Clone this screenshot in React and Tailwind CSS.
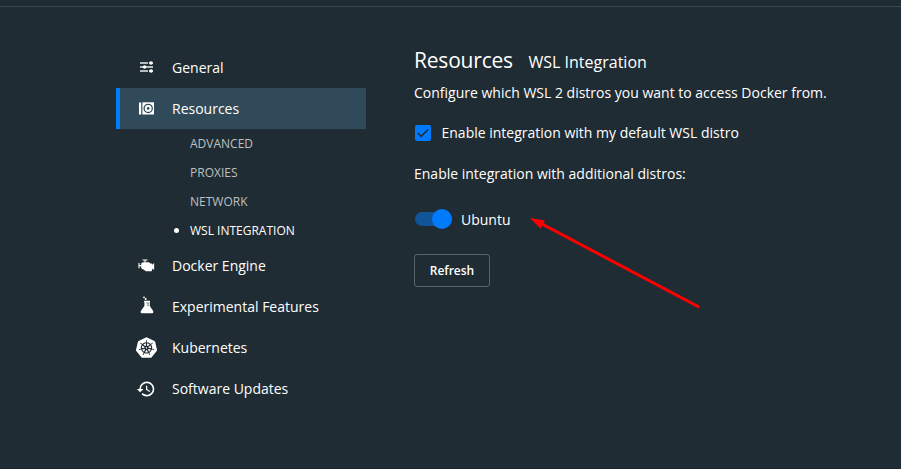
import React from "react";
import { SiKubernetes } from "react-icons/si";
import { MdHistory } from "react-icons/md";

function SlidersIcon() {
  return (
    <svg className="-mt-0.5" width="15" height="12" viewBox="0 0 15 12">
      <path d="M1 2H9M1 6H4M7 6H14M1 10H9M10 2H14M10 10H14" fill="none" stroke="#e8eaeb" strokeWidth="1.4" />
      <g fill="#fff">
        <circle cx="12" cy="2" r="1.8" />
        <circle cx="5.6" cy="6" r="1.8" />
        <circle cx="12" cy="10" r="1.8" />
      </g>
    </svg>
  );
}

function DriveIcon() {
  return (
    <svg className="-mt-px" width="15" height="13" viewBox="0 0 15 13">
      <rect x="0" y="0.5" width="2.2" height="12" fill="#fff" />
      <rect x="3.4" y="0.3" width="11.6" height="12.2" fill="#fff" />
      <circle cx="9.2" cy="6.4" r="4.1" fill="none" stroke="#314a5a" strokeWidth="1.3" />
      <circle cx="9.2" cy="6.4" r="1.3" fill="#314a5a" />
    </svg>
  );
}

function EngineIcon() {
  return (
    <svg className="-ml-px" width="17" height="13" viewBox="0 0 17 13">
      <path d="M4.6 1H9.4M7 1V3.4M1 4V9.2M1 6.6H3.4M15.6 4.4V10.4" fill="none" stroke="#fff" strokeWidth="1.1" />
      <path d="M3.2 4.2L5 3.2H11L12.4 4.4H13.8L14.4 5.4H15.6V9.8H14.4L13.6 12.2H8L5.4 10.4L3.2 9.2Z" fill="#fff" />
    </svg>
  );
}

function FlaskIcon() {
  return (
    <svg className="-mt-1" width="14" height="18" viewBox="0 0 14 18">
      <circle cx="4" cy="1.3" r=".9" fill="#fff" />
      <circle cx="5.7" cy="3" r="1" fill="#fff" />
      <path d="M4 4.8H10V5.8H9.8V10L13.2 15Q13.8 17.3 12.4 17.3H1.6Q.2 17.3 .8 15L4.4 10V5.8H4Z" fill="#fff" />
      <path d="M6.4 7.1H9M6.9 9.1H9" stroke="#202c33" strokeWidth=".7" />
    </svg>
  );
}

function Item({ icon, label, active }) {
  return (
    <div
      className={
        active
          ? "flex h-[41px] items-center border-l-4 border-[#007bff] bg-[#314a5a]"
          : "flex h-[41px] items-center border-l-4 border-transparent"
      }
    >
      <span className="ml-3.5 flex w-[25px] justify-center">{icon}</span>
      <span className="ml-[13px] text-sm leading-5">{label}</span>
    </div>
  );
}

function SubItem({ label, active }) {
  return (
    <div className="flex h-[29px] items-center pl-[58px] text-xs leading-4">
      <span className={active ? "mr-[11px] size-[5px] rounded-full bg-white" : "mr-[11px] size-[5px]"} />
      <span className={active ? "text-white" : "text-[#bcc0c2]"}>{label}</span>
    </div>
  );
}

export default function App() {
  return (
    <div className="relative h-[469px] w-[901px] overflow-hidden border-b border-[#1c252d] bg-[#202c33] font-['Open_Sans',sans-serif] text-white">
      <div className="h-[7px] border-b border-[#3c474e]" />
      <div className="flex pl-[116px] pt-10">
        <nav className="w-[250px] shrink-0">
          <Item icon={<SlidersIcon />} label="General" />
          <Item icon={<DriveIcon />} label="Resources" active />
          <SubItem label="ADVANCED" />
          <SubItem label="PROXIES" />
          <SubItem label="NETWORK" />
          <SubItem label="WSL INTEGRATION" active />
          <Item icon={<EngineIcon />} label="Docker Engine" />
          <Item icon={<FlaskIcon />} label="Experimental Features" />
          <Item icon={<SiKubernetes size={21} />} label="Kubernetes" />
          <Item icon={<MdHistory className="-ml-px" size={20} />} label="Software Updates" />
        </nav>
        <main className="ml-12">
          <div className="flex h-[30px] items-baseline">
            <h1 className="w-[99px] whitespace-nowrap text-[21px] leading-[27px] tracking-[-0.2px]">Resources</h1>
            <h2 className="ml-[15.5px] text-base leading-6">WSL Integration</h2>
          </div>
          <p className="mt-[6px] text-sm leading-5">Configure which WSL 2 distros you want to access Docker from.</p>
          <div className="mt-5 flex h-5 items-center">
            <span className="ml-[0.5px] flex size-4 items-center justify-center rounded-xs bg-[#007bff]">
              <svg width="12" height="10" viewBox="0 0 12 10" fill="none" stroke="#202c33" strokeWidth="1.6">
                <path d="M.8 5L4.2 8.4L11.2 1.2" />
              </svg>
            </span>
            <span className="ml-[11px] text-sm leading-5">Enable integration with my default WSL distro</span>
          </div>
          <p className="mt-[21px] text-sm leading-5">Enable integration with additional distros:</p>
          <div className="mt-[25px] flex h-5 items-center">
            <span className="ml-px flex h-3.5 w-[37px] items-center justify-end rounded-full bg-[#115598]">
              <span className="size-5 shrink-0 rounded-full bg-[#007bff]" />
            </span>
            <span className="ml-[9px] pt-0.5 text-sm leading-5">Ubuntu</span>
          </div>
          <button className="mt-[25px] flex h-[33px] w-[76px] items-center justify-center rounded-[3px] border border-[#59646a] text-xs font-semibold">
            Refresh
          </button>
        </main>
      </div>
      <svg className="absolute left-[520px] top-[200px]" width="200" height="120" viewBox="0 0 200 120">
        <path d="M22 24L178 106.5" stroke="#f00" strokeWidth="3" strokeLinecap="round" />
        <path d="M10 18L25 20.5L20.5 28.5Z" fill="#f00" />
      </svg>
    </div>
  );
}
